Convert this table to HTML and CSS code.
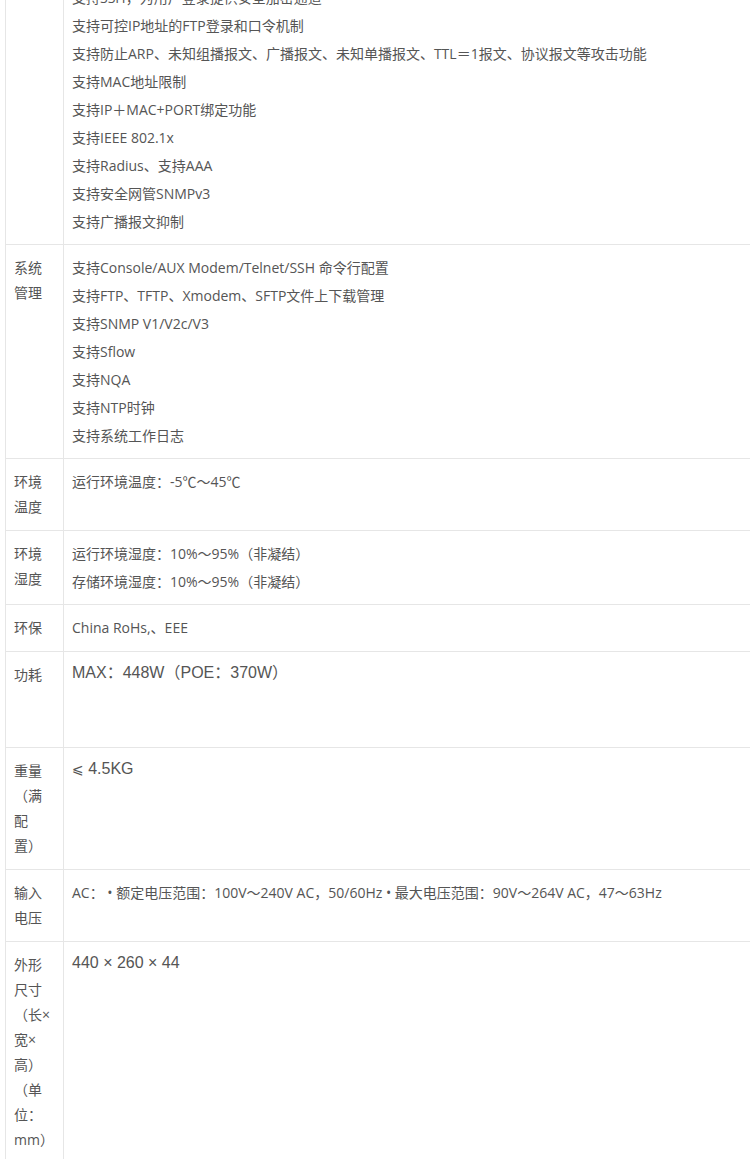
FILE: index.html
```html
<!DOCTYPE html>
<html lang="zh-CN">
<head>
  <meta charset="UTF-8" />
  <meta name="viewport" content="width=device-width, initial-scale=1.0"/>
  <title>产品规格</title>
  <link rel="stylesheet" href="styles.css">
</head>
<body>
  <div class="spec-wrap">
    <table class="spec">
      <!-- 安全特性 -->
      <tr>
        <th>安全<br>特性</th>
        <td>
          <p>支持用户分级管理和口令保护</p>
          <p>支持HWTACACS</p>
          <p>支持SSH，为用户登录提供安全加密通道</p>
          <p>支持可控IP地址的FTP登录和口令机制</p>
          <p>支持防止ARP、未知组播报文、广播报文、未知单播报文、TTL＝1报文、协议报文等攻击功能</p>
          <p>支持MAC地址限制</p>
          <p>支持IP＋MAC+PORT绑定功能</p>
          <p>支持IEEE 802.1x</p>
          <p>支持Radius、支持AAA</p>
          <p>支持安全网管SNMPv3</p>
          <p>支持广播报文抑制</p>
        </td>
      </tr>

      <!-- 系统管理 -->
      <tr>
        <th>系统<br>管理</th>
        <td>
          <p>支持Console/AUX Modem/Telnet/SSH 命令行配置</p>
          <p>支持FTP、TFTP、Xmodem、SFTP文件上下载管理</p>
          <p>支持SNMP V1/V2c/V3</p>
          <p>支持Sflow</p>
          <p>支持NQA</p>
          <p>支持NTP时钟</p>
          <p>支持系统工作日志</p>
        </td>
      </tr>

      <tr>
        <th>环境<br>温度</th>
        <td><p>运行环境温度：-5℃～45℃</p></td>
      </tr>

      <tr>
        <th>环境<br>湿度</th>
        <td>
          <p>运行环境湿度：10%～95%（非凝结）</p>
          <p>存储环境湿度：10%～95%（非凝结）</p>
        </td>
      </tr>

      <tr>
        <th>环保</th>
        <td><p>China RoHs,、EEE</p></td>
      </tr>

      <tr>
        <th>功耗</th>
        <td>
          <div class="tall">
            <p class="big">MAX：448W（POE：370W）</p>
          </div>
        </td>
      </tr>

      <tr>
        <th>重量<br>（满<br>配<br>置）</th>
        <td><p class="big"><span class="sym">⩽</span> 4.5KG</p></td>
      </tr>

      <tr>
        <th>输入<br>电压</th>
        <td><p>AC： • 额定电压范围：100V～240V AC，50/60Hz • 最大电压范围：90V～264V AC，47～63Hz</p></td>
      </tr>

      <tr>
        <th>外形<br>尺寸<br>（长×<br>宽×<br>高）<br>（单<br>位：<br>mm）</th>
        <td><p class="big">440 × 260 × 44</p></td>
      </tr>
    </table>
  </div>
</body>
</html>
```

FILE: styles.css
```css
/* Basic Reset */
* {
  margin: 0;
  padding: 0;
  box-sizing: border-box;
}

body {
  font-family: "Open Sans", "Noto Sans CJK SC", sans-serif;
  font-size: 14px;
  color: #555;
  background-color: #fff;
  overflow: hidden;
}

/* the page is scrolled into the middle of the spec table */
.spec-wrap {
  margin-top: -82px;
  padding-left: 5px;
}

.spec {
  width: 100%;
  border-collapse: collapse;
  border-left: 1px solid #e6e6e6;
}

.spec tr {
  border-top: 1px solid #e6e6e6;
}

.spec th,
.spec td {
  vertical-align: top;
  text-align: left;
  padding: 10px 8px;
  line-height: 25px;
}

.spec th {
  width: 58px;
  padding-bottom: 11px;
  font-weight: normal;
  white-space: nowrap;
  border-right: 1px solid #e6e6e6;
}

.spec td p + p {
  margin-top: 3px;
}

.spec td p.big {
  font-family: "Liberation Sans", Arial, "Noto Sans CJK SC", sans-serif;
  font-size: 16px;
  line-height: 22px;
}

.spec .sym {
  font-family: "DejaVu Sans", sans-serif;
  font-size: 14px;
}

.tall {
  min-height: 75px;
}
```
